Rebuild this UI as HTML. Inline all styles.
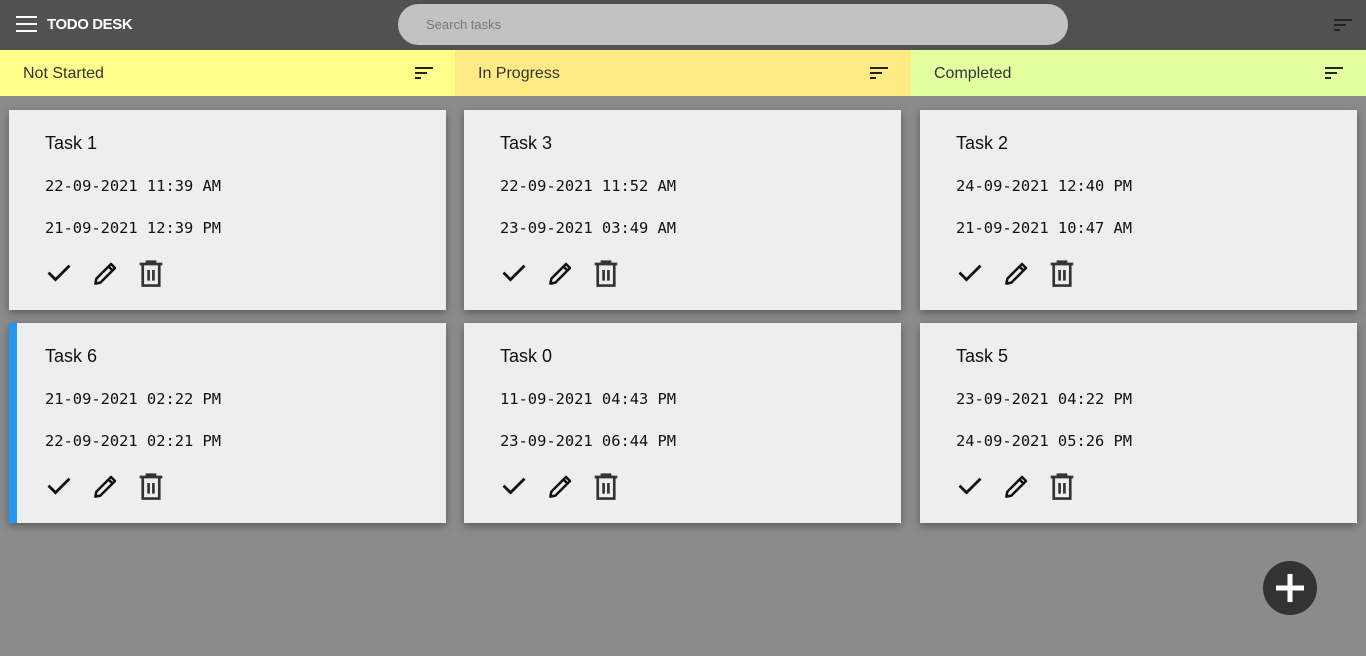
<!DOCTYPE html>
<html><head><style>
*{margin:0;padding:0;box-sizing:border-box}
body{width:1366px;height:656px;background:#8b8b8b;font-family:"Liberation Sans",sans-serif;position:relative;overflow:hidden}
.hdr{position:absolute;left:0;top:0;width:1366px;height:50px;background:#515151}
.ham{position:absolute;left:16px;top:16px;width:21px}
.ham i{display:block;height:2px;background:#fff;margin-bottom:5px}
.title{position:absolute;left:47px;top:16px;color:#fff;font-weight:bold;font-size:15px;letter-spacing:-0.4px}
.search{position:absolute;left:398px;top:4px;width:670px;height:41px;border-radius:21px;background:#c2c2c2;color:#777;font-size:13px;padding:13px 0 0 28px}
.col{position:absolute;top:50px;height:46px;font-size:16px;color:#333;padding:15px 0 0 23px}
.sort{position:absolute;width:18px}
.sort i{display:block;height:2px;background:#222;margin-bottom:3px}
.card{position:absolute;width:437px;height:200px;background:#eee;box-shadow:0 3px 8px rgba(0,0,0,.35)}
.card h3{position:absolute;left:36px;top:23px;font-weight:normal;font-size:18px;color:#111}
.card .d{position:absolute;left:36px;font-family:"DejaVu Sans Mono",monospace;font-size:15.4px;color:#111}
.card svg{position:absolute;top:148px}
.fab{position:absolute;left:1263px;top:561px;width:54px;height:54px;border-radius:50%;background:#333}
</style></head><body>
<div class="hdr">
<div class="ham"><i></i><i></i><i></i></div>
<div class="title">TODO DESK</div>
<div class="search">Search tasks</div>
<div class="sort" style="left:1334px;top:19px"><i style="width:18px;background:#222"></i><i style="width:12px"></i><i style="width:6px"></i></div>
</div>
<div class="col" style="left:0;width:455px;background:#ffff8c">Not Started</div>
<div class="col" style="left:455px;width:456px;background:#ffeb85">In Progress</div>
<div class="col" style="left:911px;width:455px;background:#e4ff9f">Completed</div>
<div class="sort" style="left:415px;top:67px"><i style="width:18px"></i><i style="width:12px"></i><i style="width:6px"></i></div>
<div class="sort" style="left:870px;top:67px"><i style="width:18px"></i><i style="width:12px"></i><i style="width:6px"></i></div>
<div class="sort" style="left:1325px;top:67px"><i style="width:18px"></i><i style="width:12px"></i><i style="width:6px"></i></div>

<div id="cards"></div>
<script>
var data=[[9,110,"Task 1","22-09-2021 11:39 AM","21-09-2021 12:39 PM",0],
[464,110,"Task 3","22-09-2021 11:52 AM","23-09-2021 03:49 AM",0],
[920,110,"Task 2","24-09-2021 12:40 PM","21-09-2021 10:47 AM",0],
[9,323,"Task 6","21-09-2021 02:22 PM","22-09-2021 02:21 PM",1],
[464,323,"Task 0","11-09-2021 04:43 PM","23-09-2021 06:44 PM",0],
[920,323,"Task 5","23-09-2021 04:22 PM","24-09-2021 05:26 PM",0]];
var icons='<svg style="left:36px" width="28" height="28" viewBox="0 0 24 24"><path d="M3 12.5l6 6L21 6.5" fill="none" stroke="#111" stroke-width="2.4"/></svg>'+
'<svg style="left:82px" width="30" height="30" viewBox="0 0 24 24"><path d="M3.5 20.5l.8-4L16 4.8l3.2 3.2L7.5 19.7z M14 6.8l3.2 3.2" fill="none" stroke="#111" stroke-width="2" stroke-linejoin="round"/></svg>'+
'<svg style="left:126px" width="32" height="32" viewBox="0 0 24 24"><path d="M3.5 4.5h17M9 4.5V2.8h6v1.7M5.8 5v15.7h12.4V5M10.2 9v8M13.8 9v8" fill="none" stroke="#333" stroke-width="2"/></svg>';
var h='';data.forEach(function(c){h+='<div class="card" style="left:'+c[0]+'px;top:'+c[1]+'px'+(c[5]?';border-left:8px solid #2196f3':'')+'"><div style="position:absolute;left:'+(c[5]?-8:0)+'px;top:0;width:437px;height:200px"><h3>'+c[2]+'</h3><div class="d" style="top:67px">'+c[3]+'</div><div class="d" style="top:109px">'+c[4]+'</div>'+icons+'</div></div>'});
document.getElementById('cards').innerHTML=h;
</script>
<div class="fab"><svg width="54" height="54" viewBox="0 0 54 54"><path d="M27 13v28M13 27h28" stroke="#fff" stroke-width="5"/></svg></div>
</body></html>
